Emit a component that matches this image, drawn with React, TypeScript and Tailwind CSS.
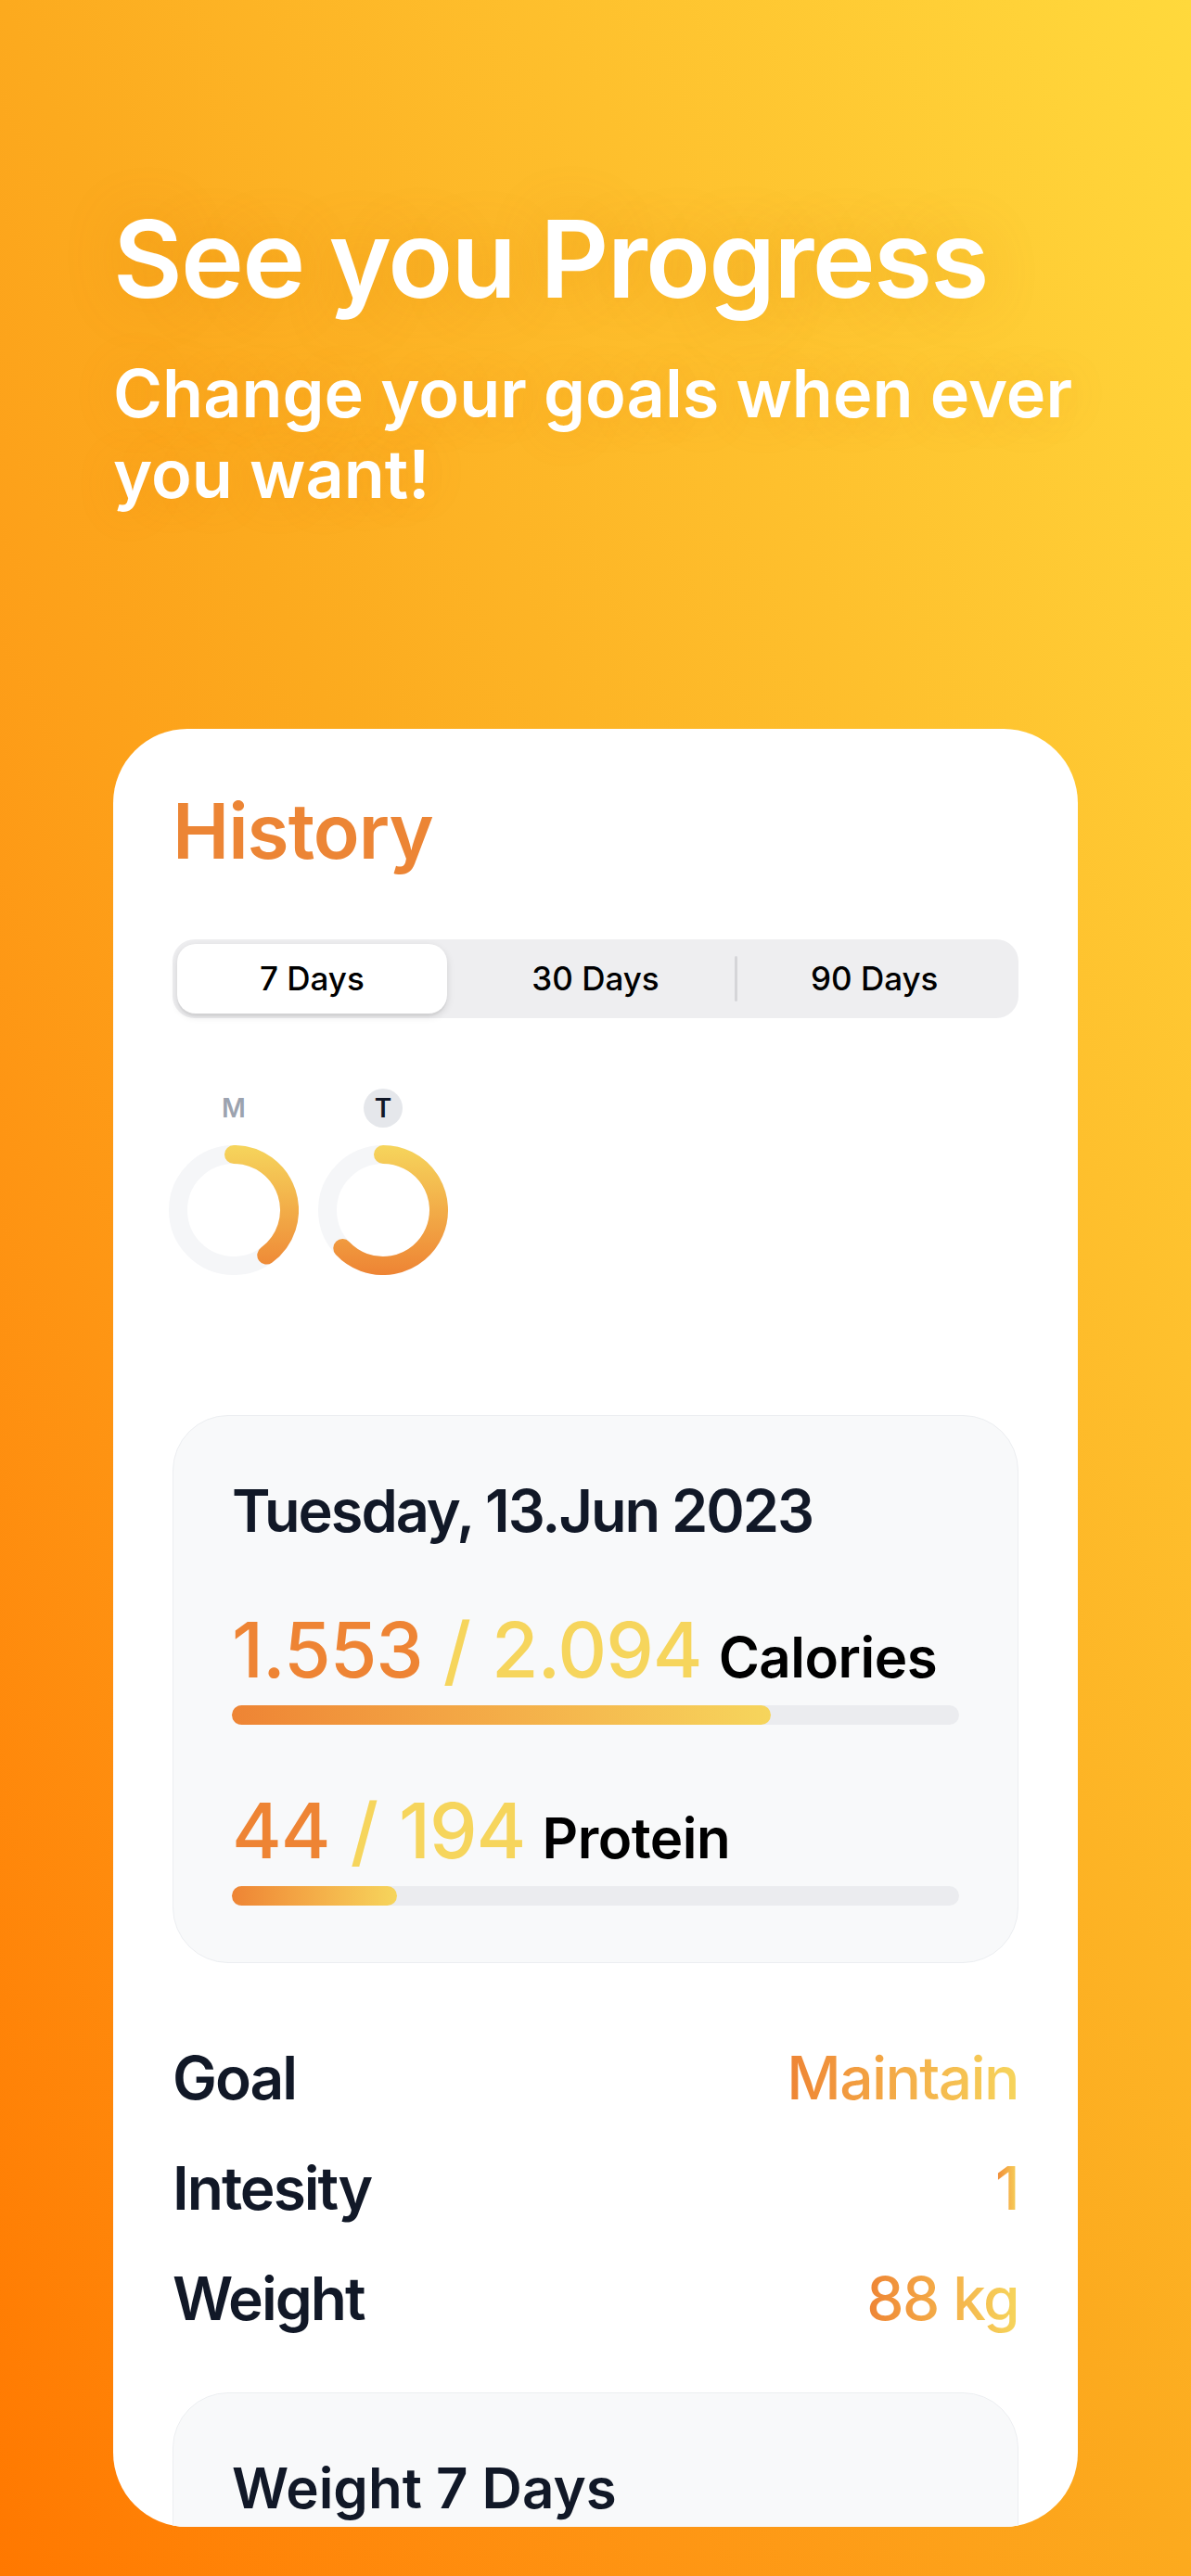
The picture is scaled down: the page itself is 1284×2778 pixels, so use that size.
import React from "react";

const ORANGE = "#ee8434";
const YELLOW = "#f6d55c";

function arcPath(progress: number, size: number, stroke: number) {
    const r = (size - stroke) / 2;
    const c = size / 2;
    const a = progress * 2 * Math.PI;
    const x = c + r * Math.sin(a);
    const y = c - r * Math.cos(a);
    const large = progress > 0.5 ? 1 : 0;
    return `M ${c} ${c - r} A ${r} ${r} 0 ${large} 1 ${x} ${y}`;
}

function Ring({ id, progress }: { id: string; progress: number }) {
    const size = 140;
    const stroke = 20;
    return (
        <svg width={size} height={size} viewBox={`0 0 ${size} ${size}`}>
            <defs>
                <linearGradient id={id} gradientUnits="userSpaceOnUse" x1="0" y1="0" x2="0" y2={size}>
                    <stop offset="0" stopColor={YELLOW} />
                    <stop offset="1" stopColor={ORANGE} />
                </linearGradient>
            </defs>
            <circle cx={size / 2} cy={size / 2} r={(size - stroke) / 2} fill="none" stroke="#f5f6f8" strokeWidth={stroke} />
            <path d={arcPath(progress, size, stroke)} fill="none" stroke={`url(#${id})`} strokeWidth={stroke} strokeLinecap="round" />
        </svg>
    );
}

function Bar({ value }: { value: number }) {
    return (
        <div className="h-[21px] w-full rounded-full bg-[#ebecef]">
            <div
                className="h-full rounded-full bg-linear-to-r from-[#ee8434] to-[#f6d55c]"
                style={{ width: `${value * 100}%` }}
            />
        </div>
    );
}

function Macro({ current, target, label, value }: { current: string; target: string; label: string; value: number }) {
    return (
        <div>
            <div className="flex items-baseline whitespace-nowrap">
                <span className="text-[82px] leading-[100px] font-medium tracking-[-1px] text-[#ee8434]">{current}</span>
                <span className="ml-[22px] text-[82px] leading-[100px] font-medium text-[#f6d55c]">/</span>
                <span className="ml-[22px] text-[82px] leading-[100px] font-medium tracking-[-1px] text-[#f6d55c]">{target}</span>
                <span className="ml-[18px] text-[60px] font-semibold tracking-[-0.5px] text-black">{label}</span>
            </div>
            <div className="mt-[7px]">
                <Bar value={value} />
            </div>
        </div>
    );
}

function InfoRow({ label, value }: { label: string; value: string }) {
    return (
        <div className="flex items-center justify-between text-[64px] leading-[78px]">
            <span className="font-semibold tracking-[-2px] text-[#111827]">{label}</span>
            <span className="bg-linear-to-r from-[#ee8434] to-[#f6d55c] bg-clip-text font-medium tracking-[-1.6px] text-transparent">
                {value}
            </span>
        </div>
    );
}

export default function App() {
    const tabs = ["7 Days", "30 Days", "90 Days"];

    return (
        <div className="min-h-[2778px] w-full overflow-hidden bg-linear-to-tr from-[#ff7800] via-[#fcaa1e] to-[#ffd93c] font-['Inter',sans-serif]">
            <div className="px-[122px] pt-[220px] text-white">
                <h1 className="text-[115px] leading-[120px] font-semibold tracking-[-1.8px] whitespace-nowrap [text-shadow:0_0_60px_rgba(200,110,0,0.25)]">
                    See you Progress
                </h1>
                <p className="mt-[40px] text-[72px] leading-[87px] font-semibold whitespace-nowrap [text-shadow:0_0_50px_rgba(200,110,0,0.2)]">
                    Change your goals when ever
                    <br />
                    you want!
                </p>
            </div>

            <div className="mx-[122px] mt-[232px] h-[1939px] overflow-hidden rounded-[80px] bg-white px-[64px] pt-[61px]">
                <h2 className="text-[82px] leading-[100px] font-semibold tracking-[-1px] text-[#ec8535]">History</h2>

                <div className="mt-[66px] flex h-[85px] items-center rounded-[24px] bg-[#eeeef0] p-[5px]">
                    {tabs.map((tab, i) => (
                        <div key={tab} className="relative flex h-full flex-1 items-center justify-center">
                            {i === 0 && (
                                <div className="absolute inset-y-0 left-0 right-[10px] rounded-[20px] bg-white shadow-[0_3px_8px_rgba(0,0,0,0.12),0_3px_1px_rgba(0,0,0,0.04)]" />
                            )}
                            {i === 2 && <div className="absolute top-[13px] bottom-[13px] left-0 w-[3px] rounded-full bg-[#d5d5d8]" />}
                            <span className={`relative text-[35px] font-medium text-black ${i === 0 ? "pr-[10px]" : ""}`}>{tab}</span>
                        </div>
                    ))}
                </div>

                <div className="mt-[76px] ml-[-4px] flex gap-[21px]">
                    {[
                        { day: "M", progress: 0.4, today: false },
                        { day: "T", progress: 0.63, today: true },
                    ].map((d) => (
                        <div key={d.day} className="flex w-[140px] flex-col items-center">
                            <div
                                className={`flex h-[42px] w-[42px] items-center justify-center rounded-full text-[28px] leading-[42px] font-semibold ${
                                    d.today ? "bg-[#e5e7eb] text-[#111827]" : "text-[#9ca3af]"
                                }`}
                            >
                                {d.day}
                            </div>
                            <div className="mt-[19px]">
                                <Ring id={`ring-${d.day}`} progress={d.progress} />
                            </div>
                        </div>
                    ))}
                </div>

                <div className="mt-[151px] rounded-[60px] border border-[#eceef1] bg-[#f8f9fa] px-[63px] pt-[63px] pb-[61px]">
                    <div className="text-[63px] leading-[78px] font-semibold tracking-[-2px] text-[#111827]">Tuesday, 13.Jun 2023</div>
                    <div className="mt-[62px]">
                        <Macro current="1.553" target="2.094" label="Calories" value={1553 / 2094} />
                    </div>
                    <div className="mt-[65px]">
                        <Macro current="44" target="194" label="Protein" value={44 / 194} />
                    </div>
                </div>

                <div className="mt-[85px] flex flex-col gap-[41px]">
                    <InfoRow label="Goal" value="Maintain" />
                    <InfoRow label="Intesity" value="1" />
                    <InfoRow label="Weight" value="88 kg" />
                </div>

                <div className="mt-[62px] h-[600px] rounded-[60px] border border-[#eceef1] bg-[#f8f9fa] px-[63px] pt-[66px]">
                    <div className="text-[60px] leading-[72px] font-semibold tracking-[0px] text-[#111827]">Weight 7 Days</div>
                </div>
            </div>
        </div>
    );
}
